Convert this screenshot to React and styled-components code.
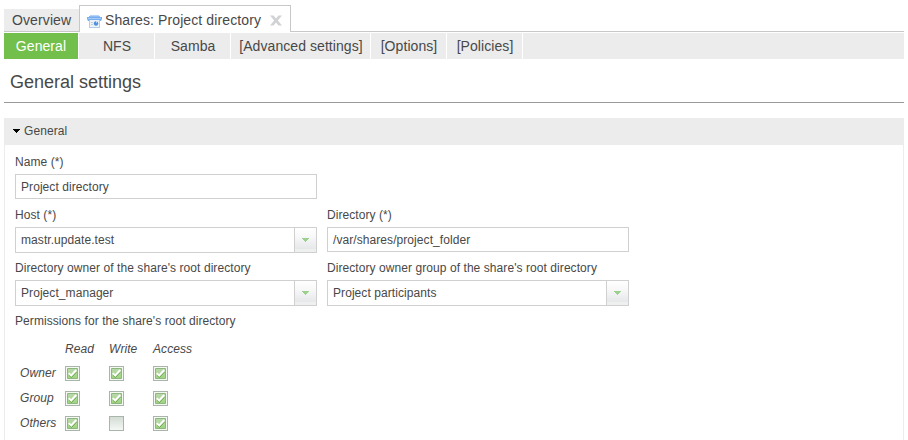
import React from 'react';
import styled, { createGlobalStyle } from 'styled-components';

const Global = createGlobalStyle`
  * { box-sizing: border-box; }
  html, body { margin: 0; background: #fff; }
  body {
    height: 440px;
    overflow: hidden;
    color: #484848;
    font: 12px/14px "Liberation Sans", Arial, sans-serif;
    letter-spacing: 0.07px;
  }
`;

const Page = styled.div`
  width: 908px;
  height: 440px;
  padding: 5px 4px 0;
  overflow: hidden;
`;

const TabBar = styled.div`
  display: flex;
  align-items: flex-end;
  height: 27px;
`;

const Tab = styled.div`
  display: flex;
  align-items: center;
  width: ${(p) => (p.$active ? 212 : 75)}px;
  height: ${(p) => (p.$active ? 27 : 23)}px;
  padding: ${(p) => (p.$active ? '1px 0 0 7px' : '0 0 0 8px')};
  font-size: 14px;
  line-height: 16px;
  letter-spacing: 0.11px;
  white-space: nowrap;
  background: ${(p) => (p.$active ? '#fff' : '#ececec')};
  border: 0 solid #c8c8c8;
  border-width: ${(p) => (p.$active ? '1px 1px 0 1px' : '0 0 1px 0')};
`;

const TabText = styled.span`
  flex: none;
`;

const TabFiller = styled.div`
  flex: 1;
  height: 1px;
  background: #c8c8c8;
`;

const FolderSvg = styled.svg`
  margin: 4px 3px 0 0;
  flex: none;
`;

const CloseSvg = styled.svg`
  margin: 2px 0 0 9px;
  flex: none;
`;

const Nav = styled.nav`
  display: flex;
  gap: 1px;
  height: 26px;
  margin-top: 1px;
`;

const NavItem = styled.div`
  width: ${(p) => p.$width}px;
  padding-left: ${(p) => (p.$active ? 0 : 1)}px;
  background: ${(p) => (p.$active ? '#73bf4b' : '#ececec')};
  color: ${(p) => (p.$active ? '#fff' : '#484848')};
  font-size: 14px;
  line-height: 26px;
  text-align: center;
  white-space: nowrap;
`;

const NavFiller = styled.div`
  flex: 1;
  background: #ececec;
`;

const Heading = styled.h1`
  height: 44px;
  margin: 0 0 15px;
  padding: 13px 0 0 6px;
  border-bottom: 1px solid #999;
  font-size: 18px;
  font-weight: normal;
  line-height: 20px;
  letter-spacing: 0;
`;

const PanelHeader = styled.div`
  display: flex;
  align-items: center;
  gap: 4px;
  height: 27px;
  padding: 0 0 1px 9px;
  background: #ececec;
`;

const PanelBody = styled.div`
  height: 300px;
  padding: 8px 10px;
  border: 1px solid #ececec;
  border-top: 0;
`;

const FormGrid = styled.div`
  display: grid;
  grid-template-columns: 302px 302px;
  grid-auto-rows: 53px;
  column-gap: 10px;
`;

const Field = styled.div`
  grid-column: ${(p) => p.$column};
`;

const Label = styled.div`
  height: 21px;
  padding-top: 2px;
  white-space: nowrap;
`;

const Input = styled.div`
  display: flex;
  justify-content: space-between;
  height: ${(p) => (p.$combo ? 26 : 25)}px;
  padding-left: 5px;
  border: 1px solid #d0d0d0;
  line-height: 24px;
`;

const Trigger = styled.div`
  display: flex;
  align-items: center;
  justify-content: center;
  width: 22px;
  border-left: 1px solid #d0d0d0;
  background: linear-gradient(#fff 0, #f8f8f9 35%, #e5e7e8 88%, #edf0ee 89%);
`;

const Permissions = styled.div`
  display: grid;
  grid-template-columns: 45px 44px 44px 44px;
  grid-template-rows: 22px 25px 25px 25px;
  align-items: center;
  margin: 5px 0 0 5px;
  font-style: italic;
`;

const Check = styled.span`
  display: block;
  width: 15px;
  height: 15px;
  margin-top: 1px;
  border: 1px solid #a9b5aa;
  background: ${(p) => (p.$on ? '#f4f9f1' : 'linear-gradient(#d3dcd5, #f5f7f5)')};
  padding: 1px;

  svg { display: block; }
`;

function Folder() {
  return (
    <FolderSvg width="15" height="14" viewBox="0 0 15 14">
      <path d="M3 0h9v1h1v3H2V1h1z" fill="#b7d5f8" />
      <path d="M2 1h11v1H2z" fill="#8ebcf3" />
      <path d="M0 2h15v2l-1 2H1L0 4z" fill="#79aeee" />
      <path d="M1 3h13v1H1z" fill="#a5cbf7" />
      <path d="M2 5h11v8H2z" fill="#b6cce6" />
      <path d="M3 5h9v7H3z" fill="#edf2f7" />
      <path d="M4 7h2v1H4zM4 9h2v1H4z" fill="#c3ced9" />
      <circle cx="9" cy="8.5" r="2.2" fill="#4e8fe2" />
      <path d="M9 6.3h1.5L9 8.5z" fill="#dcebfc" />
    </FolderSvg>
  );
}

function Close() {
  return (
    <CloseSvg width="12" height="11" viewBox="0 0 12 11">
      <path d="M0 .5h3.5L6 3.5l2.5-3H12L7.8 5.5l4.2 5H8.5L6 7.5l-2.5 3H0l4.2-5z" fill="#d0d2d3" />
    </CloseSvg>
  );
}

function Arrow({ fill }) {
  return (
    <svg width="7" height="4" viewBox="0 0 7 4" shapeRendering="crispEdges">
      <path d="M0 0h7v1H6v1H5v1H4v1H3V3H2V2H1V1H0z" fill={fill} />
    </svg>
  );
}

function CheckBox({ on }) {
  return (
    <Check $on={on}>
      {on && (
        <svg width="11" height="11" viewBox="0 0 11 11">
          <defs>
            <linearGradient id="checkFill" x1="0" y1="0" x2="0" y2="1">
              <stop offset="0" stopColor="#bcd8ae" />
              <stop offset="1" stopColor="#9dd47f" />
            </linearGradient>
          </defs>
          <path d="M.5.5h10v10H.5z" fill="url(#checkFill)" stroke="#8eb67f" />
          <path d="M2 7.3 4.5 9.5 9.5 4.1" fill="none" stroke="#6da650" strokeWidth="1" />
          <path d="M1.7 5.1 4.2 7.5 9.2 2" fill="none" stroke="#fff" strokeWidth="1.9" />
        </svg>
      )}
    </Check>
  );
}

function TextField({ label, value, combo, column }) {
  return (
    <Field $column={column}>
      <Label>{label}</Label>
      <Input $combo={combo}>
        {value}
        {combo && <Trigger><Arrow fill="#9bd08d" /></Trigger>}
      </Input>
    </Field>
  );
}

const sections = [
  ['General', 74], ['NFS', 75], ['Samba', 75],
  ['[Advanced settings]', 139], ['[Options]', 75], ['[Policies]', 75],
];

const permissions = [
  ['Owner', true, true, true],
  ['Group', true, true, true],
  ['Others', true, false, true],
];

export default function App() {
  return (
    <>
      <Global />
      <Page>
        <TabBar>
          <Tab><TabText>Overview</TabText></Tab>
          <Tab $active>
            <Folder />
            <TabText>Shares: Project directory</TabText>
            <Close />
          </Tab>
          <TabFiller />
        </TabBar>
        <Nav>
          {sections.map(([name, width], i) => (
            <NavItem key={name} $width={width} $active={i === 0}>{name}</NavItem>
          ))}
          <NavFiller />
        </Nav>
        <Heading>General settings</Heading>
        <PanelHeader><Arrow fill="#000" />General</PanelHeader>
        <PanelBody>
          <FormGrid>
            <TextField label="Name (*)" value="Project directory" column={1} />
            <TextField label="Host (*)" value="mastr.update.test" combo column={1} />
            <TextField label="Directory (*)" value="/var/shares/project_folder" column={2} />
            <TextField label="Directory owner of the share's root directory" value="Project_manager" combo column={1} />
            <TextField label="Directory owner group of the share's root directory" value="Project participants" combo column={2} />
          </FormGrid>
          <Label>Permissions for the share's root directory</Label>
          <Permissions>
            <span /><span>Read</span><span>Write</span><span>Access</span>
            {permissions.map(([name, ...flags]) => (
              <React.Fragment key={name}>
                <span>{name}</span>
                {flags.map((on, i) => <CheckBox key={i} on={on} />)}
              </React.Fragment>
            ))}
          </Permissions>
        </PanelBody>
      </Page>
    </>
  );
}
